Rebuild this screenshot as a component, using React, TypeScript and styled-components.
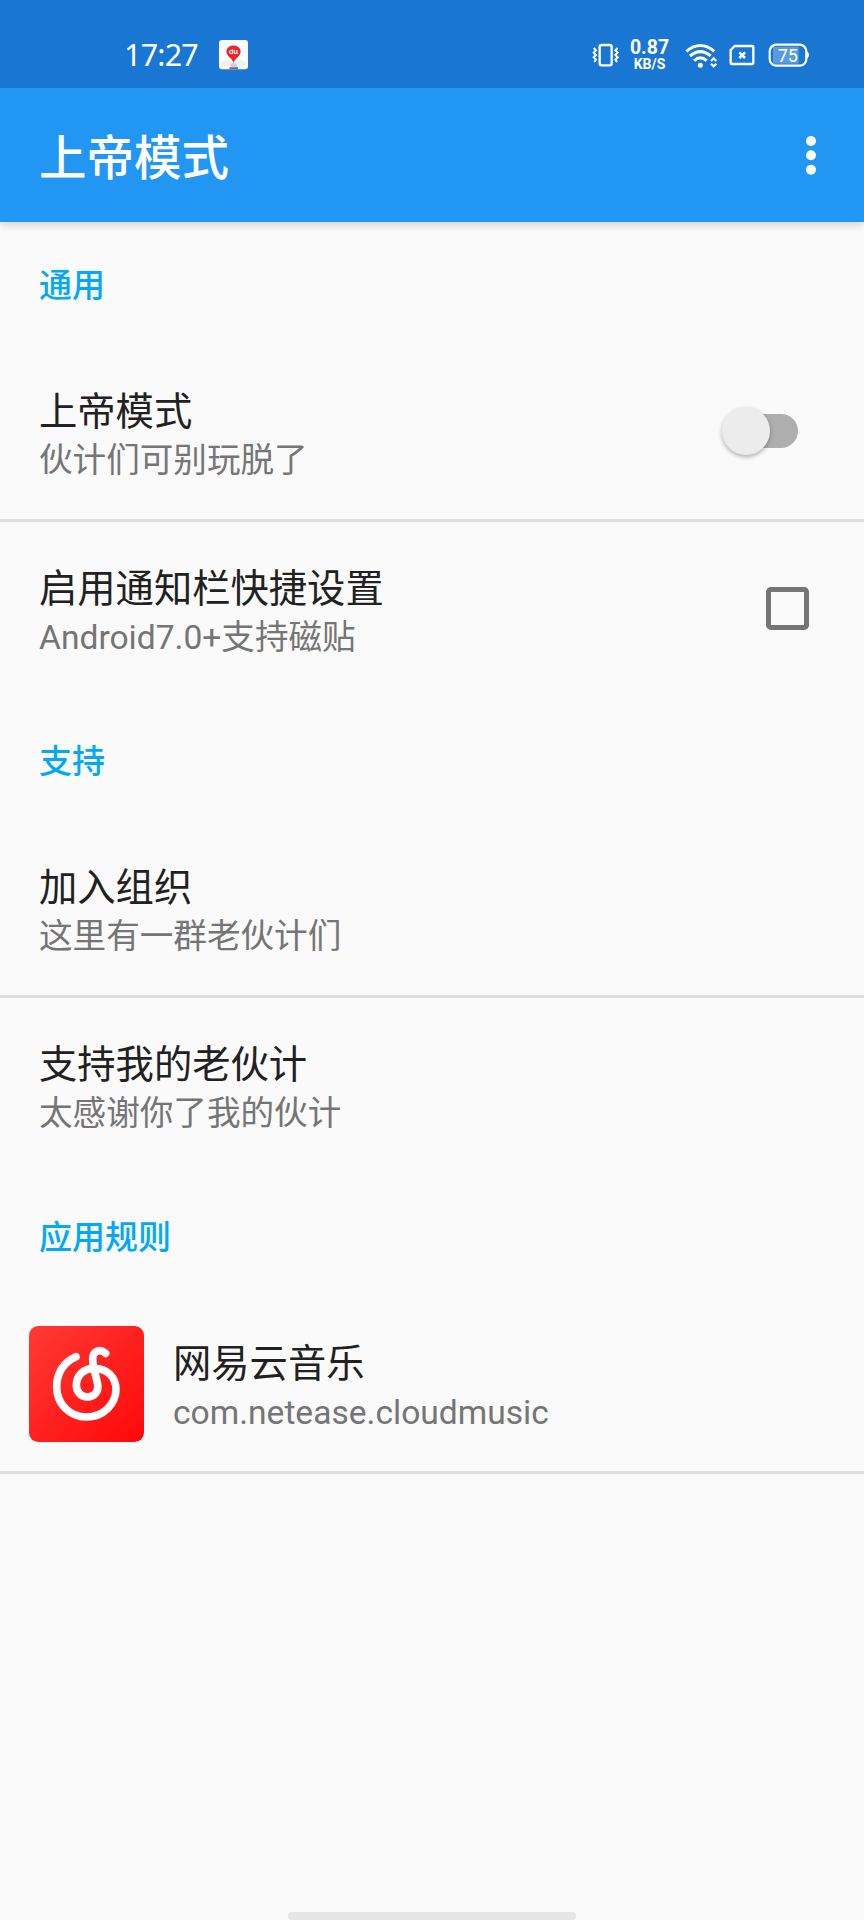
import React from "react";
import styled, { createGlobalStyle } from "styled-components";

const Global = createGlobalStyle`
  body { margin: 0; background: #fafafa; }
  * { box-sizing: border-box; }
`;

const Screen = styled.div`
  width: 864px;
  height: 1920px;
  display: flex;
  flex-direction: column;
  background: #fafafa;
  font-family: Roboto, "Noto Sans CJK SC", sans-serif;
  overflow: hidden;
`;

const StatusBar = styled.header`
  position: relative;
  z-index: 1;
  height: 88px;
  flex: none;
  display: flex;
  justify-content: space-between;
  align-items: flex-start;
  padding: 40px 54px 0 124px;
  background: #1976d2;
  color: #fff;
`;

const StatusGroup = styled.div`
  display: flex;
  align-items: center;
  height: 30px;
`;

const Clock = styled.span`
  width: 95px;
  margin-top: -2px;
  font: 400 30.5px/30px "Noto Sans", sans-serif;
  letter-spacing: -0.8px;
`;

const NetSpeed = styled.div`
  width: 40px;
  margin: 0 15.5px 0 11px;
  display: flex;
  flex-direction: column;
  align-items: center;
  font-weight: 700;
`;

const SpeedValue = styled.span`
  font-size: 19.5px;
  line-height: 18px;
`;

const SpeedUnit = styled.span`
  font-size: 14px;
  line-height: 14px;
`;

const Icon = styled.svg<{ $mr?: number }>`
  display: block;
  flex: none;
  margin-right: ${(p) => p.$mr ?? 0}px;
`;

const AppBar = styled.div`
  height: 134px;
  flex: none;
  display: flex;
  justify-content: space-between;
  align-items: center;
  padding: 0 47px 0 39px;
  background: #2196f3;
  color: #fff;
  box-shadow: 0 2px 9px rgba(0, 0, 0, 0.2);
`;

const AppTitle = styled.h1`
  margin: 7px 0 0;
  font-size: 47.5px;
  font-weight: 500;
  line-height: 60px;
`;

const SectionTitle = styled.h2`
  margin: 0;
  height: 122px;
  flex: none;
  padding: 39px 39px 0;
  font-size: 33px;
  font-weight: 500;
  line-height: 50px;
  color: #03a9f4;
`;

const Row = styled.div<{ $icon?: boolean; $divided?: boolean }>`
  height: ${(p) => (p.$divided ? 178 : 176)}px;
  flex: none;
  display: flex;
  align-items: center;
  padding: 0 55px 0 ${(p) => (p.$icon ? 29 : 39)}px;
  border-bottom: 3px solid ${(p) => (p.$divided ? "#dedede" : "transparent")};
`;

const RowText = styled.div`
  flex: 1;
  display: flex;
  flex-direction: column;
  margin-top: 9px;
`;

const RowTitle = styled.span`
  font-size: 38.3px;
  line-height: 49px;
  color: #212121;
  font-weight: 400;
`;

const RowSummary = styled.span`
  font-size: 33.6px;
  line-height: 49px;
  color: #757575;
  font-weight: 400;
`;

const SwitchTrack = styled.span`
  width: 68px;
  height: 34px;
  margin-right: 11px;
  margin-top: -1px;
  display: flex;
  align-items: center;
  border-radius: 17px;
  background: #aeaeae;
`;

const SwitchThumb = styled.span`
  width: 48px;
  height: 48px;
  flex: none;
  margin-left: -8px;
  border-radius: 50%;
  background: #ececec;
  box-shadow: 0 2px 4px rgba(0, 0, 0, 0.3);
`;

const CheckBox = styled.span`
  width: 43px;
  height: 43px;
  border: 5px solid #757575;
  border-radius: 5px;
`;

const AppIcon = styled.svg`
  width: 115px;
  height: 116px;
  margin-right: 29px;
  flex: none;
`;

const Spacer = styled.div`
  flex: 1;
`;

const HomeBar = styled.div`
  width: 288px;
  height: 8px;
  align-self: center;
  flex: none;
  border-radius: 4px;
  background: #e5e5e5;
`;

type ItemProps = {
  title: string;
  summary: string;
  divided?: boolean;
  icon?: React.ReactNode;
  control?: React.ReactNode;
};

const Item = ({ title, summary, divided, icon, control }: ItemProps) => (
  <Row $divided={divided} $icon={!!icon}>
    {icon}
    <RowText>
      <RowTitle>{title}</RowTitle>
      <RowSummary>{summary}</RowSummary>
    </RowText>
    {control}
  </Row>
);

const MapIcon = () => (
  <Icon width="29" height="30" viewBox="357 62 87 90">
    <rect x="357" y="62" width="87" height="88" rx="9" fill="#fff" />
    <path d="M364 128l20-6 14 6 24-6 16 5v12l-74 2z" fill="#eef0f0" />
    <path d="M394 132h14l8 18h-28z" fill="#b9d7ee" />
    <path d="M388 144h14v6h-14z" fill="#d8434e" />
    <path d="M402 144h12v6h-12z" fill="#3e78bd" />
    <path d="M401 131c-4-15-22-19-22-36a22 21 0 0 1 43 0c0 17-17 21-21 36z" fill="#e8262d" />
    <text x="400.500" y="103" fontSize="24" fontWeight="500" fontFamily="Roboto" textAnchor="middle" fill="#fff">du</text>
  </Icon>
);

const VibrateIcon = () => (
  <Icon width="27" height="24" viewBox="65 69 81 72" fill="none" stroke="#fff">
    <rect x="88" y="75" width="36" height="61" rx="6" strokeWidth="7" />
    <path d="M70 84l7 7-7 7 7 7-7 7 7 7-5 7M142 84l-7 7 7 7-7 7 7 7-7 7 5 7" strokeWidth="6" />
  </Icon>
);

const WifiIcon = () => (
  <Icon $mr={11} width="33" height="25" viewBox="344 66 99 75" fill="none" stroke="#fff">
    <path d="M348 91Q390 56 432 91" strokeWidth="9" />
    <path d="M359 105Q390 79 421 105" strokeWidth="9" />
    <path d="M371 119Q390 102 409 119" strokeWidth="9" />
    <circle cx="390" cy="133" r="7.500" fill="#fff" stroke="none" />
    <path d="M422 120l8-8 8 8M422 128l8 8 8-8" strokeWidth="6.500" />
  </Icon>
);

const SimIcon = () => (
  <Icon $mr={13} width="26" height="22" viewBox="476 72 78 66" fill="none" stroke="#fff">
    <path d="M493 78h53a3 3 0 0 1 3 3v48a3 3 0 0 1-3 3h-62a3 3 0 0 1-3-3v-39z" strokeWidth="7" strokeLinejoin="round" />
    <path d="M507 97l17 17M524 97l-17 17" strokeWidth="7.500" />
  </Icon>
);

const BatteryIcon = () => (
  <Icon width="42" height="24" viewBox="594 69 126 72">
    <rect x="609" y="80" width="77" height="51" fill="#fff" fillOpacity="0.28" />
    <rect x="599" y="74" width="110" height="63" rx="20" fill="none" stroke="#fff" strokeWidth="6.500" />
    <path d="M710 94q7 3 7 11t-7 11z" fill="#fff" />
    <text x="653.500" y="125" fontSize="54" fontFamily="Roboto" textAnchor="middle" fill="#fff">75</text>
  </Icon>
);

const OverflowIcon = () => (
  <Icon width="12" height="40" viewBox="0 0 12 40" fill="#fff">
    <circle cx="6" cy="6" r="5" />
    <circle cx="6" cy="20.300" r="5" />
    <circle cx="6" cy="34.700" r="5" />
  </Icon>
);

const MusicIcon = () => (
  <AppIcon viewBox="87 108 345 348">
    <defs>
      <linearGradient id="red" x1="0" y1="0" x2="1" y2="1">
        <stop offset="0" stopColor="#ff3a35" />
        <stop offset="1" stopColor="#ff0809" />
      </linearGradient>
    </defs>
    <rect x="87" y="108" width="345" height="348" rx="28" fill="url(#red)" />
    <path
      d="M228 200C191 216 170 250 170 290C170 342 210 381 259 381C310 381 348 342 348 298C348 259 318 235 283 235C250 235 229 257 229 286C229 306 243 321 262 321C282 321 297 306 293 283C289 260 278 230 278 208C278 183 300 175 317 190"
      fill="none"
      stroke="#fff"
      strokeWidth="23"
      strokeLinecap="round"
    />
  </AppIcon>
);

export default function App() {
  return (
    <Screen>
      <Global />
      <StatusBar>
        <StatusGroup>
          <Clock>17:27</Clock>
          <MapIcon />
        </StatusGroup>
        <StatusGroup>
          <VibrateIcon />
          <NetSpeed>
            <SpeedValue>0.87</SpeedValue>
            <SpeedUnit>KB/S</SpeedUnit>
          </NetSpeed>
          <WifiIcon />
          <SimIcon />
          <BatteryIcon />
        </StatusGroup>
      </StatusBar>
      <AppBar>
        <AppTitle>上帝模式</AppTitle>
        <OverflowIcon />
      </AppBar>
      <SectionTitle>通用</SectionTitle>
      <Item
        title="上帝模式"
        summary="伙计们可别玩脱了"
        divided
        control={
          <SwitchTrack>
            <SwitchThumb />
          </SwitchTrack>
        }
      />
      <Item title="启用通知栏快捷设置" summary="Android7.0+支持磁贴" control={<CheckBox />} />
      <SectionTitle>支持</SectionTitle>
      <Item title="加入组织" summary="这里有一群老伙计们" divided />
      <Item title="支持我的老伙计" summary="太感谢你了我的伙计" />
      <SectionTitle>应用规则</SectionTitle>
      <Item title="网易云音乐" summary="com.netease.cloudmusic" divided icon={<MusicIcon />} />
      <Spacer />
      <HomeBar />
    </Screen>
  );
}
